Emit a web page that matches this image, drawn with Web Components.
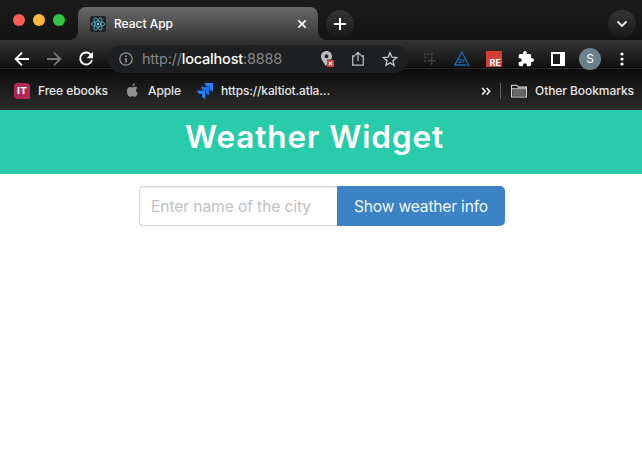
<!DOCTYPE html>
<html lang="en"><head><meta charset="utf-8"><title>React App</title>
<style>
html,body{margin:0;background:#fff;height:461px;overflow:hidden}
body{font-family:Inter,"Liberation Sans",sans-serif}
</style></head><body>
<browser-window></browser-window>
<script>
const define=(name,html,init)=>customElements.define(name,class extends HTMLElement{
  constructor(){super();const t=document.createElement('template');t.innerHTML=html;
    this.attachShadow({mode:'open'}).append(t.content.cloneNode(true));}
  connectedCallback(){if(init)init(this);}
});

/* A one-line label whose tracking is adjusted to fill the width given in "w". */
define('fit-label',`<style>:host{display:block;white-space:nowrap;flex:none}span{display:inline-block}</style><span><slot></slot></span>`,el=>{
  const fit=()=>{const s=el.shadowRoot.querySelector('span');s.style.letterSpacing='0px';
    const w=+el.getAttribute('w'),n=el.textContent.length;
    s.style.letterSpacing=((w-s.getBoundingClientRect().width)/n)+'px';el.style.width=w+'px';};
  requestAnimationFrame(fit);
});

define('tool-button',`<style>:host{display:flex;width:32px;height:28px;align-items:center;justify-content:center;flex:none;color:#fff}</style><slot></slot>`);

define('traffic-lights',`<style>:host{display:flex;gap:8px;padding:14px 0 0 13px;width:78px;box-sizing:border-box;flex:none}
i{width:12px;height:12px;border-radius:50%;background:#fe5c55;flex:none}i:nth-of-type(2){background:#feb83c}i:nth-of-type(3){background:#32c644}</style><i></i><i></i><i></i>`);

define('browser-tab',`<style>:host{display:flex;position:relative;width:240px;height:33px;margin-top:7px;align-items:center;box-sizing:border-box;padding:0 10px 0 12px;border-radius:8px 8px 0 0;background:linear-gradient(#696969,#343434);color:#fff;flex:none;font-size:12px;font-weight:500}
:host::before,:host::after{content:"";position:absolute;bottom:0;width:8px;height:8px}
:host::before{left:-8px;background:radial-gradient(circle at 0 0,transparent 7.5px,#363636 8px)}
:host::after{right:-8px;background:radial-gradient(circle at 100% 0,transparent 7.5px,#363636 8px)}
.x{margin-left:auto}.logo{margin-right:8px}svg{flex:none}</style>
<svg class="logo" width="16" height="16"><rect width="16" height="16" rx="2" fill="#222325"/><g fill="none" stroke="#4eaec8" stroke-width=".85"><ellipse cx="8" cy="8" rx="6.8" ry="2.6"/><ellipse cx="8" cy="8" rx="6.8" ry="2.6" transform="rotate(60 8 8)"/><ellipse cx="8" cy="8" rx="6.8" ry="2.6" transform="rotate(120 8 8)"/></g><circle cx="8" cy="8" r="1.2" fill="#7adff5"/></svg>
<fit-label w="59"><slot></slot></fit-label>
<svg class="x" width="12" height="12"><path d="M2.3 2.3l7.4 7.4M9.7 2.3l-7.4 7.4" stroke="#fff" stroke-width="1.7"/></svg>`,
el=>{el.shadowRoot.querySelector('fit-label').textContent=el.getAttribute('label')});

define('tab-strip',`<style>:host{display:flex;height:40px}
.r{width:28px;height:28px;border-radius:50%;background:linear-gradient(#343434,#181818);display:flex;align-items:center;justify-content:center;margin-top:10px}
.new{margin-left:8px}.more{margin-left:auto;margin-right:6px}</style>
<traffic-lights></traffic-lights><browser-tab label="React App"></browser-tab>
<div class="r new"><svg width="12" height="12"><path d="M6 0v12M0 6h12" stroke="#fff" stroke-width="2"/></svg></div>
<div class="r more"><svg width="12" height="8"><path d="M1.5 1.5L6 6l4.500-4.500" fill="none" stroke="#eee" stroke-width="1.8"/></svg></div>`);

define('address-bar',`<style>:host{display:flex;width:300px;height:28px;border-radius:14px;background:#1d1f21;align-items:center;margin:0 6px;box-sizing:border-box;padding:0 2px 0 11px;flex:none;font-size:14.5px;color:#85878a}
svg{flex:none}b{font-weight:500;color:#fff}fit-label{margin:-2px auto 0 9px}</style>
<svg width="14" height="14"><circle cx="7" cy="7" r="6.200" fill="none" stroke="#94979b" stroke-width="1.3"/><path d="M6.200 6h1.600v4.500H6.200zM6.200 3.400h1.600V5H6.200z" fill="#94979b"/></svg>
<fit-label w="140">http://<b>localhost</b>:8888</fit-label>
<tool-button><svg width="16" height="18"><path fill-rule="evenodd" d="M8.500 1C5.400 1 3 3.300 3 6.300 3 9.900 8 16 8 16l1-2V9.500h4.400c.4-1 .6-2.200.6-3.200C14 3.300 11.600 1 8.500 1zM8.500 4.300a2 2 0 1 1 0 4 2 2 0 0 1 0-4z" fill="#bcbdbe"/><rect x="9" y="10" width="7" height="7" fill="#d93c35"/><path d="M11 12l3 3M14 12l-3 3" stroke="#fff" stroke-width="1.100"/></svg></tool-button>
<tool-button><svg width="16" height="16"><path d="M5 5H2.700v9.200h10.600V5H11M8 10V1.500M5.200 4.300L8 1.500l2.800 2.800" fill="none" stroke="#b9babc" stroke-width="1.300"/></svg></tool-button>
<tool-button><svg width="16" height="16"><path d="M8 1.700l1.850 4.400 4.750.4-3.600 3.150 1.080 4.650L8 11.850 3.920 14.300 5 9.650 1.400 6.500l4.750-.4z" fill="none" stroke="#c1c2c4" stroke-width="1.350"/></svg></tool-button>`);

define('tool-bar',`<style>:host{display:flex;height:38px;align-items:center;padding-left:6px}
.av{width:22px;height:22px;border-radius:50%;background:#6b808c;color:#fff;font-size:12px;line-height:22px;text-align:center}</style>
<tool-button><svg width="16" height="16"><path d="M15 8H2M8 1.700L1.700 8 8 14.300" fill="none" stroke="#fff" stroke-width="1.900"/></svg></tool-button>
<tool-button><svg width="16" height="16"><path d="M1 8h13M8 1.700L14.300 8 8 14.300" fill="none" stroke="#777" stroke-width="1.900"/></svg></tool-button>
<tool-button><svg width="16" height="16"><path d="M13.200 4.200A6 6 0 1 0 14 9" fill="none" stroke="#fff" stroke-width="1.900"/><path d="M15 .8v6.400H8.600z" fill="#fff"/></svg></tool-button>
<address-bar></address-bar>
<tool-button><svg width="14" height="14" fill="#3f3f3f"><path d="M1 1h2v2H1zM4.500 1h2v2h-2zM8 1h2v2H8zM1 4.500h2v2H1zM1 8h2v2H1zM8 4.500h1.500V8H13v1.500H9.500V13H8V9.500H4.500V8H8z"/></svg></tool-button>
<tool-button><svg width="16" height="16"><path d="M12 14H.8L8 1.300l5.500 10.500" fill="none" stroke="#1f6cb4" stroke-width="1.300"/><circle cx="14" cy="14" r="1.200" fill="none" stroke="#1f6cb4"/><text x="4.200" y="12" font-family="Inter,sans-serif" font-size="6.500" fill="#2d72b3">ax</text></svg></tool-button>
<tool-button><svg width="16" height="16"><rect width="16" height="16" fill="#d33f36"/><text x="3.600" y="14.800" font-family="Inter,sans-serif" font-weight="700" font-size="8.500" textLength="11.500" lengthAdjust="spacingAndGlyphs" fill="#fff">RE</text></svg></tool-button>
<tool-button><svg width="16" height="16" viewBox="1 1 22 22"><path fill="#fff" d="M20.500 11H19V7c0-1.100-.9-2-2-2h-4V3.500a2.500 2.500 0 0 0-5 0V5H4c-1.100 0-2 .9-2 2v3.800h1.500a2.700 2.700 0 0 1 0 5.400H2V20c0 1.100.9 2 2 2h3.800v-1.500a2.700 2.700 0 0 1 5.400 0V22H17c1.100 0 2-.9 2-2v-4h1.500a2.500 2.500 0 0 0 0-5z"/></svg></tool-button>
<tool-button><svg width="14" height="14"><path fill="#fff" fill-rule="evenodd" d="M0 0h14v14H0zM2 2v10h7V2z"/></svg></tool-button>
<tool-button><div class="av">S</div></tool-button>
<tool-button><svg width="4" height="14" fill="#fff"><circle cx="2" cy="2" r="1.600"/><circle cx="2" cy="7" r="1.600"/><circle cx="2" cy="12" r="1.600"/></svg></tool-button>`);

define('book-mark',`<style>:host{display:flex;align-items:center;gap:8px;flex:none}slot{display:flex}fit-label{margin-top:-2px}</style><slot></slot><fit-label></fit-label>`,
el=>{const f=el.shadowRoot.querySelector('fit-label');f.setAttribute('w',el.getAttribute('w'));f.textContent=el.getAttribute('label')});

define('bookmark-bar',`<style>:host{display:flex;height:26px;padding:0 8px 6px 14px;align-items:center;color:#e6e6e6;font-size:12px;font-weight:500}
.d{width:1px;height:16px;background:#626262;margin:0 10px 0 9px}.m{margin-left:auto}</style>
<book-mark w="70" label="Free ebooks"><svg width="16" height="16"><path d="M4 0h8q4 0 4 4v12H4q-4 0-4-4V4q0-4 4-4z" fill="#b02a58"/><text x="3" y="11" font-family="Inter,sans-serif" font-weight="700" font-size="9" textLength="10" lengthAdjust="spacingAndGlyphs" fill="#fff">IT</text></svg></book-mark>
<book-mark w="33" label="Apple" style="margin-left:16px"><svg width="16" height="16"><path transform="translate(.4 -.7)" fill="#929292" d="M10.700 1c.1 1.500-1.200 3-2.700 3C7.900 2.500 9.300 1.100 10.700 1zM13 5.700c-2 1.200-1.800 4 .5 5-.5 1.500-1.600 3.800-3 3.800-.9 0-1.300-.6-2.400-.6s-1.500.6-2.400.6C3.900 14.500 2.500 11.600 2.500 9c0-2.700 1.500-4.400 3.300-4.400 1 0 1.700.6 2.400.6.600 0 1.500-.7 2.700-.7.800 0 1.600.4 2.100 1.200z"/></svg></book-mark>
<book-mark w="109" label="https://kaltiot.atla…" style="margin-left:16px"><svg width="16" height="16"><defs><path id="j" d="M0 0h8.400v8.400Q5 7.800 5 5V3.400H3.400Q.6 3.400 0 0z"/></defs><use href="#j" x="7.600" fill="#2b80fb"/><use href="#j" x="3.800" y="3.800" fill="#1f70ec"/><use href="#j" y="7.600" fill="#2b80fb"/></svg></book-mark>
<svg class="m" width="10" height="9"><path d="M1.200 1l3 3.300-3 3.300M5.600 1l3 3.300-3 3.300" fill="none" stroke="#eee" stroke-width="1.600"/></svg>
<div class="d"></div>
<book-mark w="99" label="Other Bookmarks"><svg width="16" height="14"><path d="M.6 13V1.200h5l1.600 1.900h8.200V13z" fill="#161616" stroke="#e2e2e2" stroke-width="1.100"/><path d="M1.500 5.500h13v6.600h-13z" fill="#666"/><path d="M1 4.800h14" stroke="#e2e2e2"/></svg></book-mark>`);

define('browser-chrome',`<style>:host{display:block;height:110px;box-sizing:border-box;background:
linear-gradient(#0d0d0d,#2b2b2b) 0 69px/100% 41px no-repeat,
linear-gradient(#060606,#060606) 0 67px/100% 1px no-repeat,
linear-gradient(#292929,#292929) 0 68px/100% 1px no-repeat,
linear-gradient(#343434,#111) 0 40px/100% 27px no-repeat,
linear-gradient(#1c1c1c,#131313) 0 0/100% 40px no-repeat}</style>
<tab-strip></tab-strip><tool-bar></tool-bar><bookmark-bar></bookmark-bar>`);

define('page-header',`<style>:host{display:flex;height:64px;background:#29cbaa;color:#fff;font-size:31.5px;font-weight:600;padding-left:185px;box-sizing:border-box}
h1{font:inherit;line-height:40px;margin:7px 0 0}</style><h1><fit-label w="259">Weather Widget</fit-label></h1>`);

define('city-form',`<style>:host{display:flex;justify-content:center;padding:12px 0 0 2px;font-size:15.6px}
.i,.b{height:40px;box-sizing:border-box;display:flex;align-items:center}
.i{width:198px;border:1px solid #d3d3d3;border-right:0;border-radius:4px 0 0 4px;padding-left:11px;color:#c2c2c2;box-shadow:inset 0 1px 1px #0001;font-weight:400}
.b{width:168px;background:#3c83c5;color:#f0f5fa;border-radius:0 5px 5px 0;padding-left:17px;font-weight:400}</style>
<div class="i"><fit-label w="160">Enter name of the city</fit-label></div><div class="b"><fit-label w="134">Show weather info</fit-label></div>`);

define('browser-window',`<style>:host{display:block;width:642px;height:461px;background:#fff;overflow:hidden}</style>
<browser-chrome></browser-chrome><page-header></page-header><city-form></city-form>`);
</script></body></html>
